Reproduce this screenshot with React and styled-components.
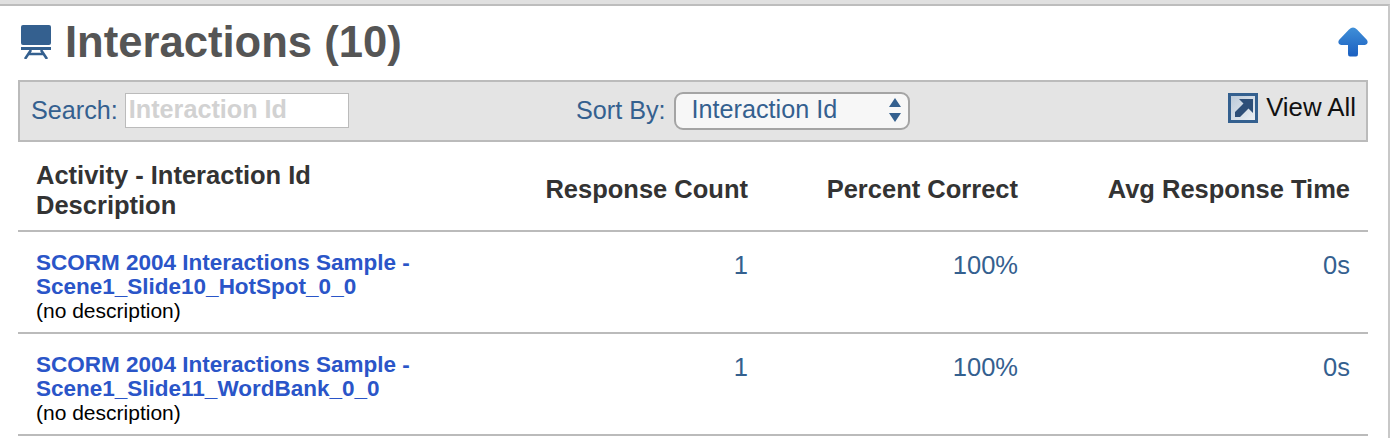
import React from 'react'
import styled, { createGlobalStyle } from 'styled-components'

const Global = createGlobalStyle`
  html, body { margin: 0; padding: 0; background: #fff; overflow: hidden; }
  body { font-family: "Liberation Sans", Arial, sans-serif; }
`

const Panel = styled.div`
  width: 1390px;
  height: 434px;
  background: #fff;
  border-top: 2px solid #bdbdbd;
  border-right: 2px solid #c8c8c8;
  margin-top: 4px;
  padding: 0 20px 0 18px;
  box-sizing: border-box;
  position: relative;
`
const TopStrip = styled.div`
  position: absolute;
  left: 0;
  right: -2px;
  top: -6px;
  height: 4px;
  background: #e0e0e0;
`
const Header = styled.div`
  height: 74px;
  display: flex;
  align-items: center;
  justify-content: space-between;
  padding: 0 0 0 3px;
`
const Heading = styled.h1`
  margin: -3px 0 0;
  display: flex;
  align-items: center;
  gap: 14px;
  font-size: 43.6px;
  font-weight: bold;
  color: #555;
  line-height: 50px;
`
const ArrowLink = styled.a`
  display: flex;
  margin: -3px 0 0;
`
const Toolbar = styled.div`
  height: 62px;
  box-sizing: border-box;
  border: 2px solid #bbb;
  background: #e4e4e4;
  display: grid;
  grid-template-columns: 545px 1fr auto;
  align-items: center;
  padding: 0 10px 2px 11px;
`
const Field = styled.label`
  display: flex;
  align-items: center;
  gap: ${({ $gap }) => $gap}px;
  font-size: 25.2px;
  color: #34608f;
`
const SearchInput = styled.input`
  width: 224px;
  height: 35px;
  box-sizing: border-box;
  border: 1px solid #bbb;
  outline: 1px solid #fff;
  outline-offset: -2px;
  background: #fff;
  padding: 0 3px 2px;
  font: bold 25.2px "Liberation Sans", Arial, sans-serif;
  &::placeholder { color: #d2d2d2; opacity: 1; }
`
const SortBox = styled.div`
  width: 236px;
  height: 38px;
  margin-bottom: -2px;
  box-sizing: border-box;
  border: 2px solid #a4a4a4;
  border-radius: 9px;
  background: #f7f7f7;
  display: flex;
  align-items: center;
  justify-content: space-between;
  padding: 0 5px 3px 16px;
  font-size: 25.2px;
  color: #34608f;
`
const ViewAll = styled.a`
  display: flex;
  align-items: center;
  gap: 8px;
  font-size: 25.8px;
  color: #111;
  margin-top: -5px;
`
const Row = styled.div`
  display: grid;
  grid-template-columns: 432px 280px 270px 1fr;
  height: ${({ $h }) => $h}px;
  box-sizing: border-box;
  border-bottom: 2px solid #bbb;
  padding: 0 18px;
`
const HeadCell = styled.div`
  font-size: 25.5px;
  font-weight: bold;
  line-height: 30px;
  color: #333;
  text-align: ${({ $left }) => ($left ? 'left' : 'right')};
  align-self: center;
  padding-top: ${({ $left }) => ($left ? 8 : 6)}px;
`
const NameCell = styled.div`
  padding-top: 19px;
`
const NameLink = styled.a`
  display: block;
  font-size: 22.5px;
  font-weight: bold;
  line-height: 24px;
  color: #2a55c8;
  white-space: nowrap;
`
const Description = styled.div`
  font-size: 21px;
  line-height: 23px;
  color: #000;
`
const ValueCell = styled.div`
  font-size: 25.5px;
  line-height: 30px;
  color: #34608f;
  text-align: right;
  padding-top: 18px;
`

const ScreenIcon = () => (
  <svg width="30" height="34" viewBox="0 0 30 34">
    <rect x="0" y="0" width="30" height="20" rx="2" fill="#34608f" />
    <rect x="0" y="22" width="30" height="3" fill="#34608f" />
    <path d="M10 25 L4 34 M20 25 L26 34 M8 29 H22" stroke="#34608f" strokeWidth="2.6" fill="none" />
  </svg>
)

const UpArrow = () => (
  <svg width="30" height="30" viewBox="0 0 30 30">
    <defs>
      <linearGradient id="up" x1="0" y1="0" x2="0" y2="1">
        <stop offset="0" stopColor="#3f8fd8" />
        <stop offset="1" stopColor="#1b5fc0" />
      </linearGradient>
    </defs>
    <path d="M15 0.5 Q17 0.5 19 2.5 L29 13 Q31 17 27 18 H20 V27 Q20 29.5 18 29.5 H12 Q10 29.5 10 27 V18 H3 Q-1 17 1 13 L11 2.5 Q13 0.5 15 0.5 Z" fill="url(#up)" />
  </svg>
)

const ExpandIcon = () => (
  <svg width="30" height="30" viewBox="0 0 30 30">
    <defs>
      <linearGradient id="pane" x1="0" y1="0" x2="1" y2="1">
        <stop offset="0" stopColor="#b9c8d8" />
        <stop offset="1" stopColor="#eef1f4" />
      </linearGradient>
    </defs>
    <rect x="1.5" y="1.5" width="27" height="27" fill="url(#pane)" stroke="#34608f" strokeWidth="3" />
    <path d="M25 6 V20 L20.5 15.5 L12 24 H7 V19 L15.5 10.5 L11 6 Z" fill="#2e4f78" />
  </svg>
)

const SortArrows = () => (
  <svg width="16" height="30" viewBox="0 0 16 30">
    <path d="M8 3 L14 12 H2 Z M8 27 L14 18 H2 Z" fill="#34608f" />
  </svg>
)

const rows = [
  { name: 'Scene1_Slide10_HotSpot_0_0' },
  { name: 'Scene1_Slide11_WordBank_0_0' },
]

const App = () => (
  <>
    <Global />
    <Panel>
      <TopStrip />
      <Header>
        <Heading>
          <ScreenIcon />
          Interactions (10)
        </Heading>
        <ArrowLink>
          <UpArrow />
        </ArrowLink>
      </Header>
      <Toolbar>
        <Field $gap={7}>
          Search:
          <SearchInput placeholder="Interaction Id" />
        </Field>
        <Field $gap={8}>
          Sort By:
          <SortBox>
            Interaction Id
            <SortArrows />
          </SortBox>
        </Field>
        <ViewAll>
          <ExpandIcon />
          View All
        </ViewAll>
      </Toolbar>
      <Row $h={90}>
        <HeadCell $left>
          Activity - Interaction Id
          <br />
          Description
        </HeadCell>
        <HeadCell>Response Count</HeadCell>
        <HeadCell>Percent Correct</HeadCell>
        <HeadCell>Avg Response Time</HeadCell>
      </Row>
      {rows.map((row) => (
        <Row $h={102} key={row.name}>
          <NameCell>
            <NameLink>SCORM 2004 Interactions Sample -</NameLink>
            <NameLink>{row.name}</NameLink>
            <Description>(no description)</Description>
          </NameCell>
          <ValueCell>1</ValueCell>
          <ValueCell>100%</ValueCell>
          <ValueCell>0s</ValueCell>
        </Row>
      ))}
    </Panel>
  </>
)

export default App
